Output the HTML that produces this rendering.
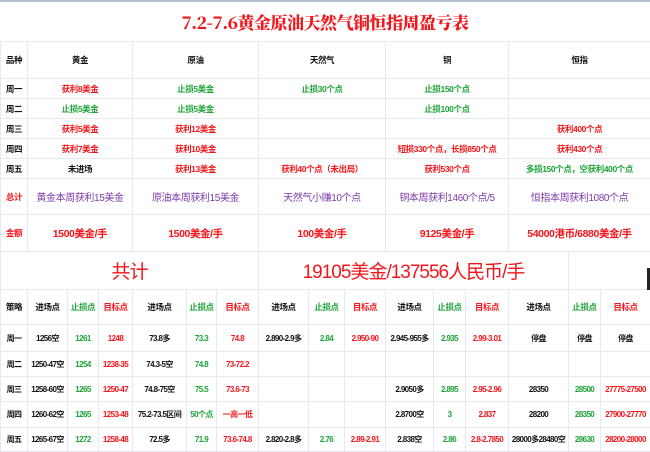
<!DOCTYPE html>
<html><head><meta charset="utf-8"><style>
*{margin:0;padding:0;box-sizing:border-box}
body{width:650px;height:450px;overflow:hidden;background:#fff;font-family:"Liberation Sans","Noto Sans CJK SC",sans-serif;font-weight:bold;position:relative}
.bar{position:absolute;left:0;top:0;width:650px;height:2px;background:#b4c2d4}
.title{position:absolute;left:0;top:2px;width:650px;height:40px;text-align:center;line-height:40px;color:#f0161c;font-size:17px;font-family:"Noto Serif CJK SC","Liberation Serif",serif;font-weight:900;letter-spacing:-0.5px}
table{position:absolute;left:0;top:41px;border-collapse:collapse;table-layout:fixed;width:650px}
td{border:1.5px solid #e6e9f0;text-align:center;font-size:8.5px;white-space:nowrap;overflow:hidden;color:#111;padding:0;letter-spacing:-0.4px}
.r{color:#f5151a}.g{color:#1ea43a}.p{color:#7a3aa8;font-size:10px;font-weight:normal}
.m{font-size:10.5px}
.big{font-size:19px;color:#f0161c;font-weight:normal;letter-spacing:-1px}
.s td{font-size:8px;letter-spacing:-0.6px}
</style></head><body>
<div class="bar"></div>
<div class="title">7.2-7.6黄金原油天然气铜恒指周盈亏表</div>
<table>
<colgroup><col style="width:27px"><col style="width:40px"><col style="width:31px"><col style="width:34px"><col style="width:54px"><col style="width:30px"><col style="width:42px"><col style="width:50px"><col style="width:36px"><col style="width:41px"><col style="width:48px"><col style="width:32px"><col style="width:43px"><col style="width:60px"><col style="width:32px"><col style="width:50px"></colgroup>
<tr style="height:37px"><td>品种</td><td colspan="3">黄金</td><td colspan="3">原油</td><td colspan="3">天然气</td><td colspan="3">铜</td><td colspan="3">恒指</td></tr>
<tr style="height:20px"><td>周一</td><td colspan="3" class="r">获利8美金</td><td colspan="3" class="g">止损5美金</td><td colspan="3" class="g">止损30个点</td><td colspan="3" class="g">止损150个点</td><td colspan="3"></td></tr>
<tr style="height:20px"><td>周二</td><td colspan="3" class="g">止损5美金</td><td colspan="3" class="g">止损5美金</td><td colspan="3"></td><td colspan="3" class="g">止损100个点</td><td colspan="3"></td></tr>
<tr style="height:20px"><td>周三</td><td colspan="3" class="r">获利5美金</td><td colspan="3" class="r">获利12美金</td><td colspan="3"></td><td colspan="3"></td><td colspan="3" class="r">获利400个点</td></tr>
<tr style="height:20px"><td>周四</td><td colspan="3" class="r">获利7美金</td><td colspan="3" class="r">获利10美金</td><td colspan="3"></td><td colspan="3" class="r">短损330个点，长损850个点</td><td colspan="3" class="r">获利430个点</td></tr>
<tr style="height:20px"><td>周五</td><td colspan="3">未进场</td><td colspan="3" class="r">获利13美金</td><td colspan="3" class="r">获利40个点（未出局）</td><td colspan="3" class="r">获利530个点</td><td colspan="3" class="g">多损150个点，空获利400个点</td></tr>
<tr style="height:36px"><td class="r">总计</td><td colspan="3" class="p">黄金本周获利15美金</td><td colspan="3" class="p">原油本周获利15美金</td><td colspan="3" class="p">天然气小赚10个点</td><td colspan="3" class="p">铜本周获利1460个点/5</td><td colspan="3" class="p">恒指本周获利1080个点</td></tr>
<tr style="height:37px"><td class="r">金额</td><td colspan="3" class="r m">1500美金/手</td><td colspan="3" class="r m">1500美金/手</td><td colspan="3" class="r m">100美金/手</td><td colspan="3" class="r m">9125美金/手</td><td colspan="3" class="r m">54000港币/6880美金/手</td></tr>
<tr style="height:38px"><td colspan="7" class="big">共计</td><td colspan="7" class="big">19105美金/137556人民币/手</td><td colspan="2" style="border-right:none"></td></tr>
<tr style="height:35px"><td>策略</td><td>进场点</td><td class="g">止损点</td><td class="r">目标点</td><td>进场点</td><td class="g">止损点</td><td class="r">目标点</td><td>进场点</td><td class="g">止损点</td><td class="r">目标点</td><td>进场点</td><td class="g">止损点</td><td class="r">目标点</td><td>进场点</td><td class="g">止损点</td><td class="r">目标点</td></tr>
<tbody class="s">
<tr style="height:27px"><td>周一</td><td>1256空</td><td class="g">1261</td><td class="r">1248</td><td>73.8多</td><td class="g">73.3</td><td class="r">74.8</td><td>2.890-2.9多</td><td class="g">2.84</td><td class="r">2.950-90</td><td>2.945-955多</td><td class="g">2.935</td><td class="r">2.99-3.01</td><td>停盘</td><td>停盘</td><td>停盘</td></tr>
<tr style="height:25px"><td>周二</td><td>1250-47空</td><td class="g">1254</td><td class="r">1238-35</td><td>74.3-5空</td><td class="g">74.8</td><td class="r">73-72.2</td><td></td><td></td><td></td><td></td><td></td><td></td><td></td><td></td><td></td></tr>
<tr style="height:25px"><td>周三</td><td>1258-60空</td><td class="g">1265</td><td class="r">1250-47</td><td>74.8-75空</td><td class="g">75.5</td><td class="r">73.6-73</td><td></td><td></td><td></td><td>2.9050多</td><td class="g">2.895</td><td class="r">2.95-2.96</td><td>28350</td><td class="g">28500</td><td class="r">27775-27500</td></tr>
<tr style="height:26px"><td>周四</td><td>1260-62空</td><td class="g">1265</td><td class="r">1253-48</td><td>75.2-73.5区间</td><td class="g">50个点</td><td class="r">一高一低</td><td></td><td></td><td></td><td>2.8700空</td><td class="g">3</td><td class="r">2.837</td><td>28200</td><td class="g">28350</td><td class="r">27900-27770</td></tr>
<tr style="height:24px"><td>周五</td><td>1265-67空</td><td class="g">1272</td><td class="r">1258-48</td><td>72.5多</td><td class="g">71.9</td><td class="r">73.6-74.8</td><td>2.820-2.8多</td><td class="g">2.76</td><td class="r">2.89-2.91</td><td>2.838空</td><td class="g">2.86</td><td class="r">2.8-2.7850</td><td>28000多28480空</td><td class="g">28630</td><td class="r">28200-28000</td></tr>
</tbody>
</table>
<div style="position:absolute;left:647px;top:268px;width:3px;height:22px;background:#222"></div>
</body></html>
